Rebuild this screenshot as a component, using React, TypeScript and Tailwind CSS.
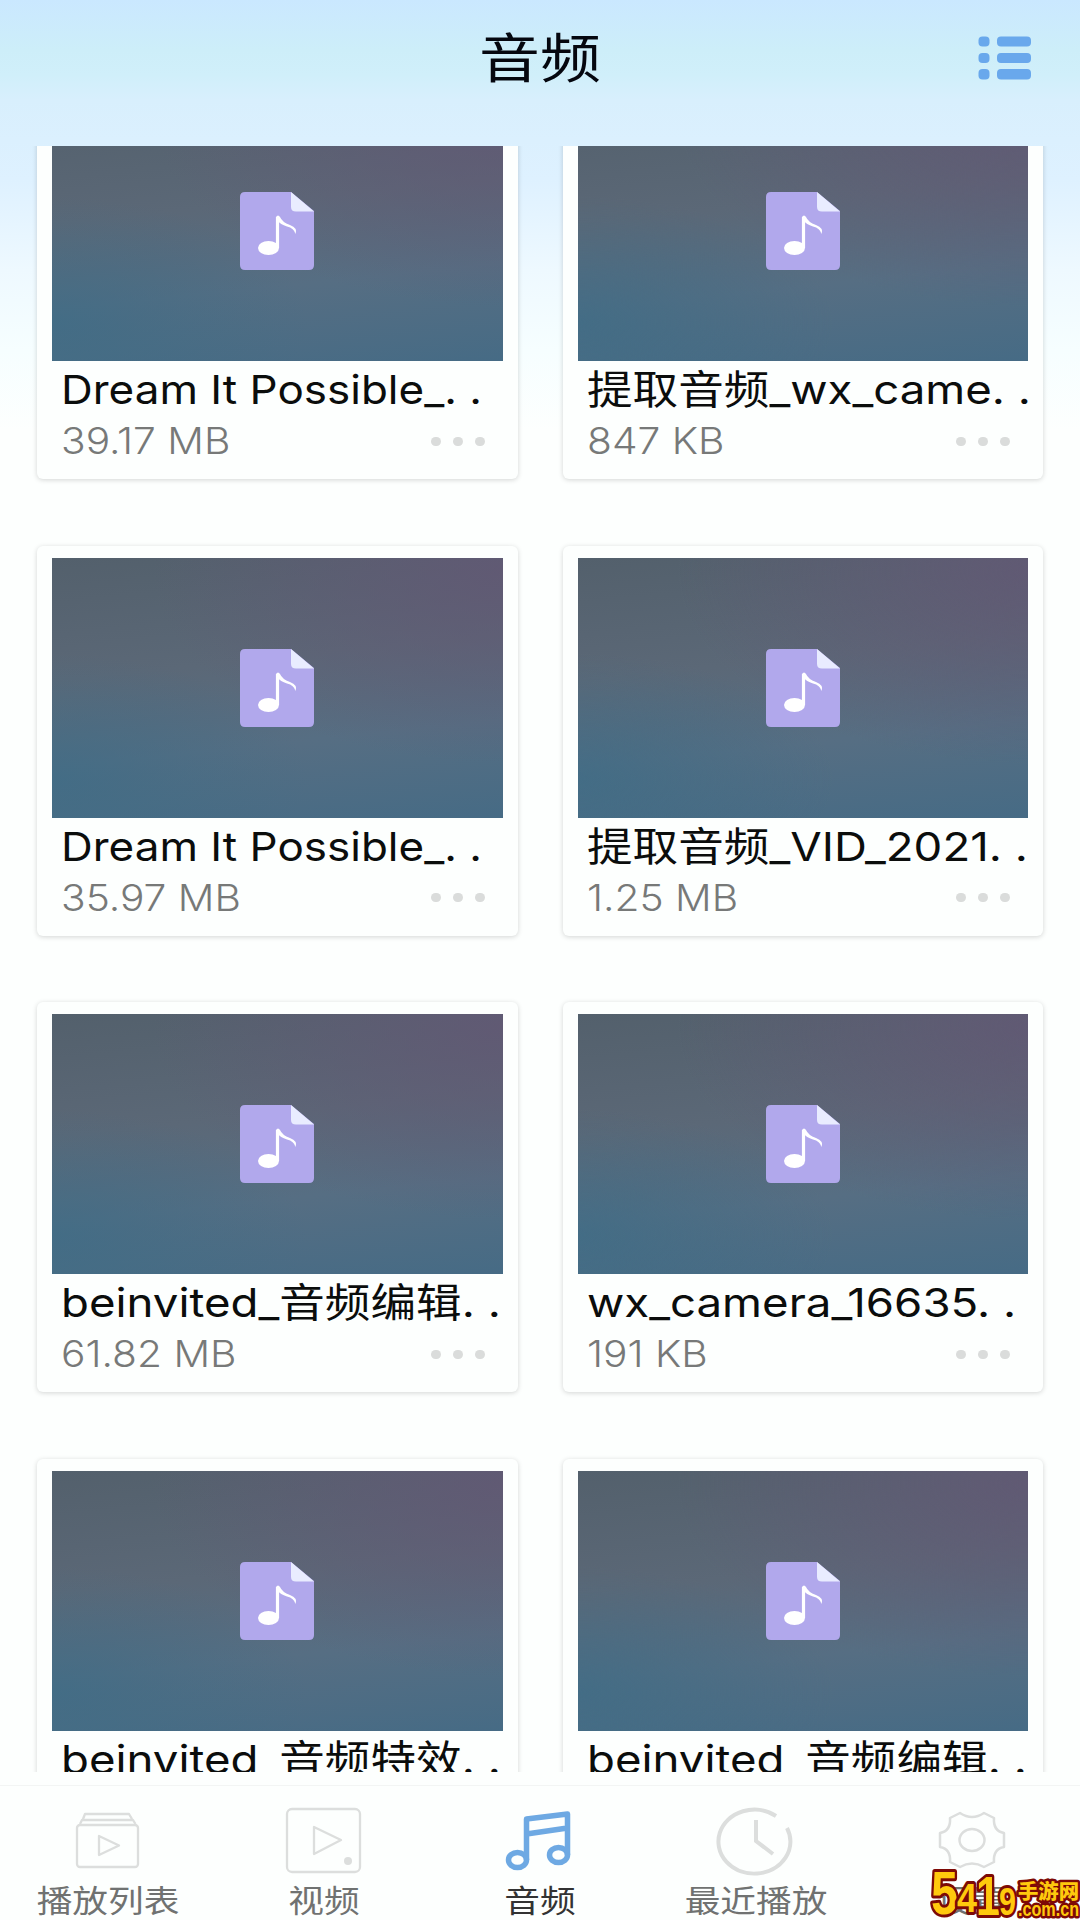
import type { ReactNode } from 'react';
import { clsx } from 'clsx';

type AudioFile = {
  title: string;
  size: string;
  titleFit: string;
  sizeFit: string;
};

const files: AudioFile[] = [
  { title: 'Dream It Possible_. .', size: '39.17 MB', titleFit: 'scale-x-[1.1]', sizeFit: 'scale-x-[1.1]' },
  { title: '提取音频_wx_came. .', size: '847 KB', titleFit: 'scale-x-[1.14]', sizeFit: 'scale-x-[1.1]' },
  { title: 'Dream It Possible_. .', size: '35.97 MB', titleFit: 'scale-x-[1.1]', sizeFit: 'scale-x-[1.1]' },
  { title: '提取音频_VID_2021. .', size: '1.25 MB', titleFit: 'scale-x-[1.14]', sizeFit: 'scale-x-[1.1]' },
  { title: 'beinvited_音频编辑. .', size: '61.82 MB', titleFit: 'scale-x-[1.14]', sizeFit: 'scale-x-[1.1]' },
  { title: 'wx_camera_16635. .', size: '191 KB', titleFit: 'scale-x-[1.14]', sizeFit: 'scale-x-[1.1]' },
  { title: 'beinvited_音频特效. .', size: '12.40 MB', titleFit: 'scale-x-[1.14]', sizeFit: 'scale-x-[1.1]' },
  { title: 'beinvited_音频编辑. .', size: '8.16 MB', titleFit: 'scale-x-[1.14]', sizeFit: 'scale-x-[1.1]' },
];

export default function App() {
  return (
    <div className="relative flex h-[1920px] w-[1080px] flex-col overflow-hidden bg-[linear-gradient(180deg,#cae8ff_0px,#cdeef9_50px,#d0effa_75px,#d8effd_100px,#def1ff_180px,#eef9ff_270px,#f6feff_350px,#fdfffe_430px)] font-['Inter','Noto_Sans_CJK_SC',sans-serif]">
      {/* Header */}
      <header className="grid h-[146px] shrink-0 grid-cols-[1fr_auto_1fr] px-[49px]">
        <h1 className="col-start-2 mt-[19px] h-20 scale-x-[1.15] text-[53px] leading-[80px] text-[#05070f]">音频</h1>
        <button className="mt-9 h-11 w-[53px] justify-self-end" aria-label="列表">
          <ListIcon />
        </button>
      </header>

      {/* Audio grid */}
      <main className="h-[1626px] shrink-0 overflow-hidden px-[37px]">
        <div className="-mt-[57px] grid grid-cols-2 gap-x-[45px] gap-y-[66.5px]">
          {files.map((file, index) => (
            <AudioCard key={index} file={file} />
          ))}
        </div>
      </main>

      {/* Bottom navigation */}
      <nav className="mt-[13px] grid grow grid-cols-5 border-t border-[#f3f5f4]">
        <NavItem label="播放列表" icon={<PlaylistIcon />} />
        <NavItem label="视频" icon={<VideoIcon />} />
        <NavItem label="音频" icon={<MusicIcon />} active />
        <NavItem label="最近播放" icon={<RecentIcon />} />
        <NavItem label="设置" icon={<SettingsIcon />} />
      </nav>

      <SiteBadge />
    </div>
  );
}

function AudioCard({ file }: { file: AudioFile }) {
  return (
    <div className="h-[390px] rounded-md bg-[#fdfffe] px-[15px] pt-3 shadow-[0_1px_5px_rgba(0,0,0,0.17)]">
      <div className="flex h-[260px] items-center justify-center bg-[radial-gradient(ellipse_at_100%_5%,rgba(98,88,116,0.85)_0%,rgba(98,88,116,0)_55%),radial-gradient(ellipse_at_0%_85%,rgba(60,108,134,0.7)_0%,rgba(60,108,134,0)_40%),linear-gradient(174deg,#53606c_0%,#5b6877_40%,#566e83_68%,#466b85_100%)]">
        <AudioFileIcon />
      </div>
      <div className={clsx('ml-[9px] mt-1 h-[50px] w-max origin-left whitespace-pre text-[40px] leading-[50px] text-[#0b0d0c]', file.titleFit)}>
        {file.title}
      </div>
      <div className="ml-[9px] mt-px flex h-[50px] items-center justify-between pr-[18px]">
        <span className={clsx('origin-left text-[37px] font-light leading-[50px] text-[#777978]', file.sizeFit)}>{file.size}</span>
        <div className="flex gap-3">
          <span className="h-[9px] w-2.5 rounded-full bg-[#dadcdb]" />
          <span className="h-[9px] w-2.5 rounded-full bg-[#dadcdb]" />
          <span className="h-[9px] w-2.5 rounded-full bg-[#dadcdb]" />
        </div>
      </div>
    </div>
  );
}

function NavItem({ label, icon, active = false }: { label: string; icon: ReactNode; active?: boolean }) {
  return (
    <div className="flex flex-col items-center pt-[14px]">
      <div className="h-[80px] w-[80px]">{icon}</div>
      <span className={clsx('mt-[1px] scale-x-[1.15] whitespace-nowrap text-[31px] leading-10', active ? 'text-[#333]' : 'text-[#707271]')}>
        {label}
      </span>
    </div>
  );
}

function ListIcon() {
  return (
    <svg viewBox="0 0 53 44" className="h-full w-full" fill="#69a8ec">
      <rect x="0.5" y="0.5" width="11" height="10" rx="4" />
      <rect x="19" y="0.5" width="34" height="10" rx="4" />
      <rect x="0.5" y="17" width="11" height="10" rx="4" />
      <rect x="19" y="17" width="34" height="10" rx="4" />
      <rect x="0.5" y="33" width="11" height="10.5" rx="4" />
      <rect x="19" y="33" width="34" height="10.5" rx="4" />
    </svg>
  );
}

function AudioFileIcon() {
  return (
    <svg viewBox="0 0 74 78" className="h-[78px] w-[74px]">
      <path d="M5 0H51L74 19V73Q74 78 69 78H5Q0 78 0 73V5Q0 0 5 0Z" fill="#b1a8ec" />
      <path d="M51 0L74 19.5H56Q51 19.5 51 15Z" fill="#e9ecff" />
      <ellipse cx="28.500" cy="56" rx="10.500" ry="7" fill="#fff" />
      <path d="M37.500 56V25" stroke="#fff" strokeWidth="3.200" />
      <path d="M36 25Q38 22 40 25Q42 30 50 33Q58 36 55.500 42Q54 36 47 34.500Q40 32 38 29Z" fill="#fff" />
    </svg>
  );
}

function PlaylistIcon() {
  return (
    <svg viewBox="0 0 80 80" className="h-full w-full" fill="none" stroke="#dcdedd" strokeWidth="2.300" strokeLinejoin="round">
      <rect x="9" y="25" width="61" height="42" rx="3" />
      <path d="M12 24L14 20H65L67.500 24M15 19L17 14H61L64 19" />
      <path d="M31 36V55L51 45.500Z" />
    </svg>
  );
}

function VideoIcon() {
  return (
    <svg viewBox="0 0 80 80" className="h-full w-full" fill="none" stroke="#dcdedd" strokeWidth="2.300" strokeLinejoin="round">
      <rect x="3" y="9" width="73" height="63" rx="5" />
      <path d="M30 27V54L57 40Z" />
      <circle cx="64" cy="61" r="4" fill="#dcdedd" stroke="none" />
    </svg>
  );
}

function MusicIcon() {
  return (
    <svg viewBox="0 0 80 80" className="h-full w-full" fill="none" stroke="#6ea9e3" strokeWidth="5.500" strokeLinejoin="round">
      <ellipse cx="17.500" cy="60" rx="9" ry="7.500" />
      <ellipse cx="58.500" cy="55" rx="9" ry="7.500" />
      <path d="M26.500 60V19L67.500 14V55M26.500 34L67.500 28" />
    </svg>
  );
}

function RecentIcon() {
  return (
    <svg viewBox="0 0 80 80" className="h-full w-full" fill="none" stroke="#dcdedd" strokeWidth="4">
      <path d="M60 16A36 32 0 1 0 71 28" />
      <path d="M40 20V41L57 54" />
    </svg>
  );
}

function SettingsIcon() {
  return (
    <svg viewBox="0 0 80 80" className="h-full w-full" fill="none" stroke="#dcdedd" strokeWidth="2.500" strokeLinejoin="round">
      <path d="M28 13Q40 21 52 13L62 18Q61 31 72 33V47Q61 49 62 62L52 67Q40 60 28 67L18 62Q19 49 8 47V33Q19 31 18 18Z" />
      <ellipse cx="40" cy="40" rx="12.500" ry="11" />
    </svg>
  );
}

function SiteBadge() {
  return (
    <svg
      viewBox="0 0 150 54"
      className="absolute bottom-0 right-0 h-[54px] w-[150px] font-['Liberation_Sans','Noto_Sans_CJK_SC',sans-serif]"
      fill="#ffc90d"
      stroke="#7d0a06"
      strokeWidth="6"
      strokeLinejoin="round"
      paintOrder="stroke"
      fontWeight="900"
    >
      <text x="1" y="48" fontSize="62" textLength="27" lengthAdjust="spacingAndGlyphs">5</text>
      <text x="27" y="46" fontSize="40" textLength="20" lengthAdjust="spacingAndGlyphs">4</text>
      <text x="46" y="49" fontSize="56" textLength="24" lengthAdjust="spacingAndGlyphs">1</text>
      <text x="69" y="49" fontSize="39" textLength="17" lengthAdjust="spacingAndGlyphs">9</text>
      <text x="88" y="33" fontSize="20" textLength="61" lengthAdjust="spacingAndGlyphs" strokeWidth="5">手游网</text>
      <text x="88" y="50" fontSize="21" textLength="61" lengthAdjust="spacingAndGlyphs" strokeWidth="5">.com.cn</text>
    </svg>
  );
}
